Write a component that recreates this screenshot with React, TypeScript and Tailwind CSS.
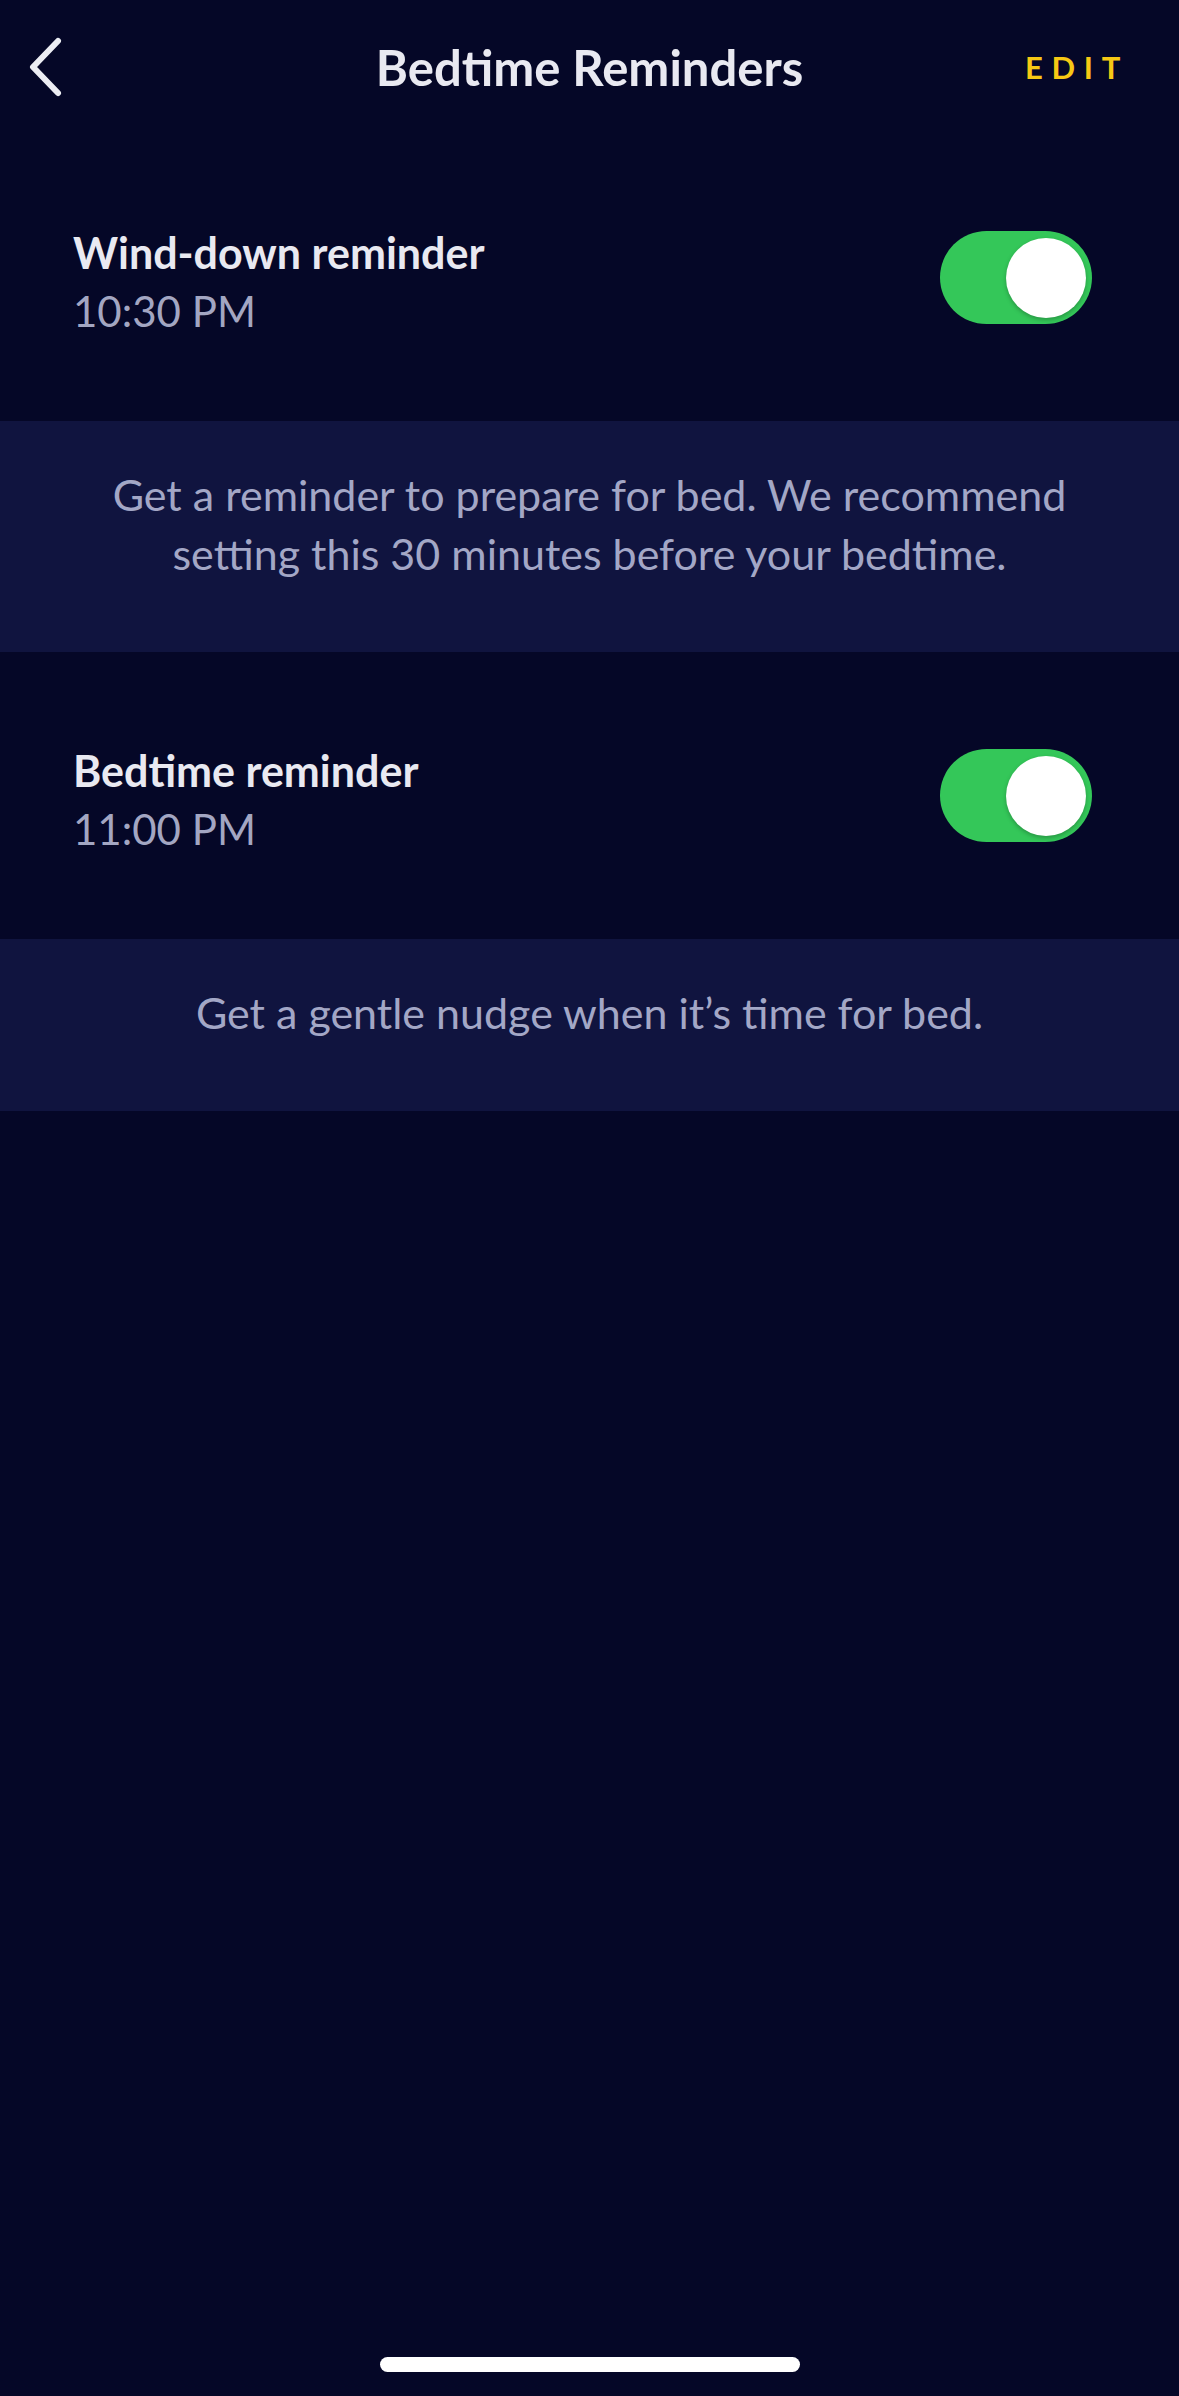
import React from 'react';

type Reminder = {
  id: string;
  title: string;
  time: string;
  note: string[];
};

const reminders: Reminder[] = [
  {
    id: 'wind-down',
    title: 'Wind-down reminder',
    time: '10:30 PM',
    note: [
      'Get a reminder to prepare for bed. We recommend',
      'setting this 30 minutes before your bedtime.',
    ],
  },
  {
    id: 'bedtime',
    title: 'Bedtime reminder',
    time: '11:00 PM',
    note: ['Get a gentle nudge when it\u2019s time for bed.'],
  },
];

function Toggle() {
  return (
    <div className="flex h-[93px] w-[152px] items-center justify-end rounded-full bg-[#34c759] pr-[6px]">
      <div className="h-[80px] w-[80px] rounded-full bg-white shadow-[0_2px_4px_rgba(0,0,0,0.25)]" />
    </div>
  );
}

export default function App() {
  return (
    <div
      className="flex min-h-[2396px] w-full flex-col bg-[#050727] text-[#e9e9f1]"
      style={{ fontFamily: 'Lato, "Noto Sans", sans-serif' }}
    >
      {/* header */}
      <div className="grid h-[134px] grid-cols-[1fr_auto_1fr] items-center">
        <div className="pl-[27px]">
          <svg width="36" height="62" viewBox="0 0 36 62" fill="none">
            <path
              d="M31 5 L6 31 L31 57"
              stroke="#ecedf3"
              strokeWidth="6"
              strokeLinecap="round"
              strokeLinejoin="round"
            />
          </svg>
        </div>
        <h1 className="text-[49px] font-bold leading-[60px] text-[#e9e9f1]">
          Bedtime Reminders
        </h1>
        <div className="flex justify-end pr-[50px]">
          <span className="text-[31px] font-bold tracking-[0.28em] text-[#f7c814]">
            EDIT
          </span>
        </div>
      </div>

      {reminders.map((r) => (
        <div key={r.id}>
          <div className="flex h-[287px] items-center justify-between pl-[73px] pr-[87px]">
            <div className="flex flex-col pt-[10px]">
              <span className="text-[43px] font-bold leading-[50px] text-[#e9e9f1]">
                {r.title}
              </span>
              <span className="mt-[6px] text-[42px] leading-[54px] text-[#a3a6c2]">
                {r.time}
              </span>
            </div>
            <Toggle />
          </div>
          <div
            className={
              r.note.length > 1
                ? 'flex h-[231px] flex-col items-center justify-center bg-[#10143f] pb-[26px]'
                : 'flex h-[172px] flex-col items-center justify-center bg-[#10143f] pb-[26px]'
            }
          >
            {r.note.map((line) => (
              <p
                key={line}
                className="text-center text-[43px] leading-[59px] text-[#a3a7c6]"
              >
                {line}
              </p>
            ))}
          </div>
        </div>
      ))}

      <div className="flex-1" />
      <div className="flex justify-center pb-[24px]">
        <div className="h-[15px] w-[420px] rounded-full bg-white" />
      </div>
    </div>
  );
}
